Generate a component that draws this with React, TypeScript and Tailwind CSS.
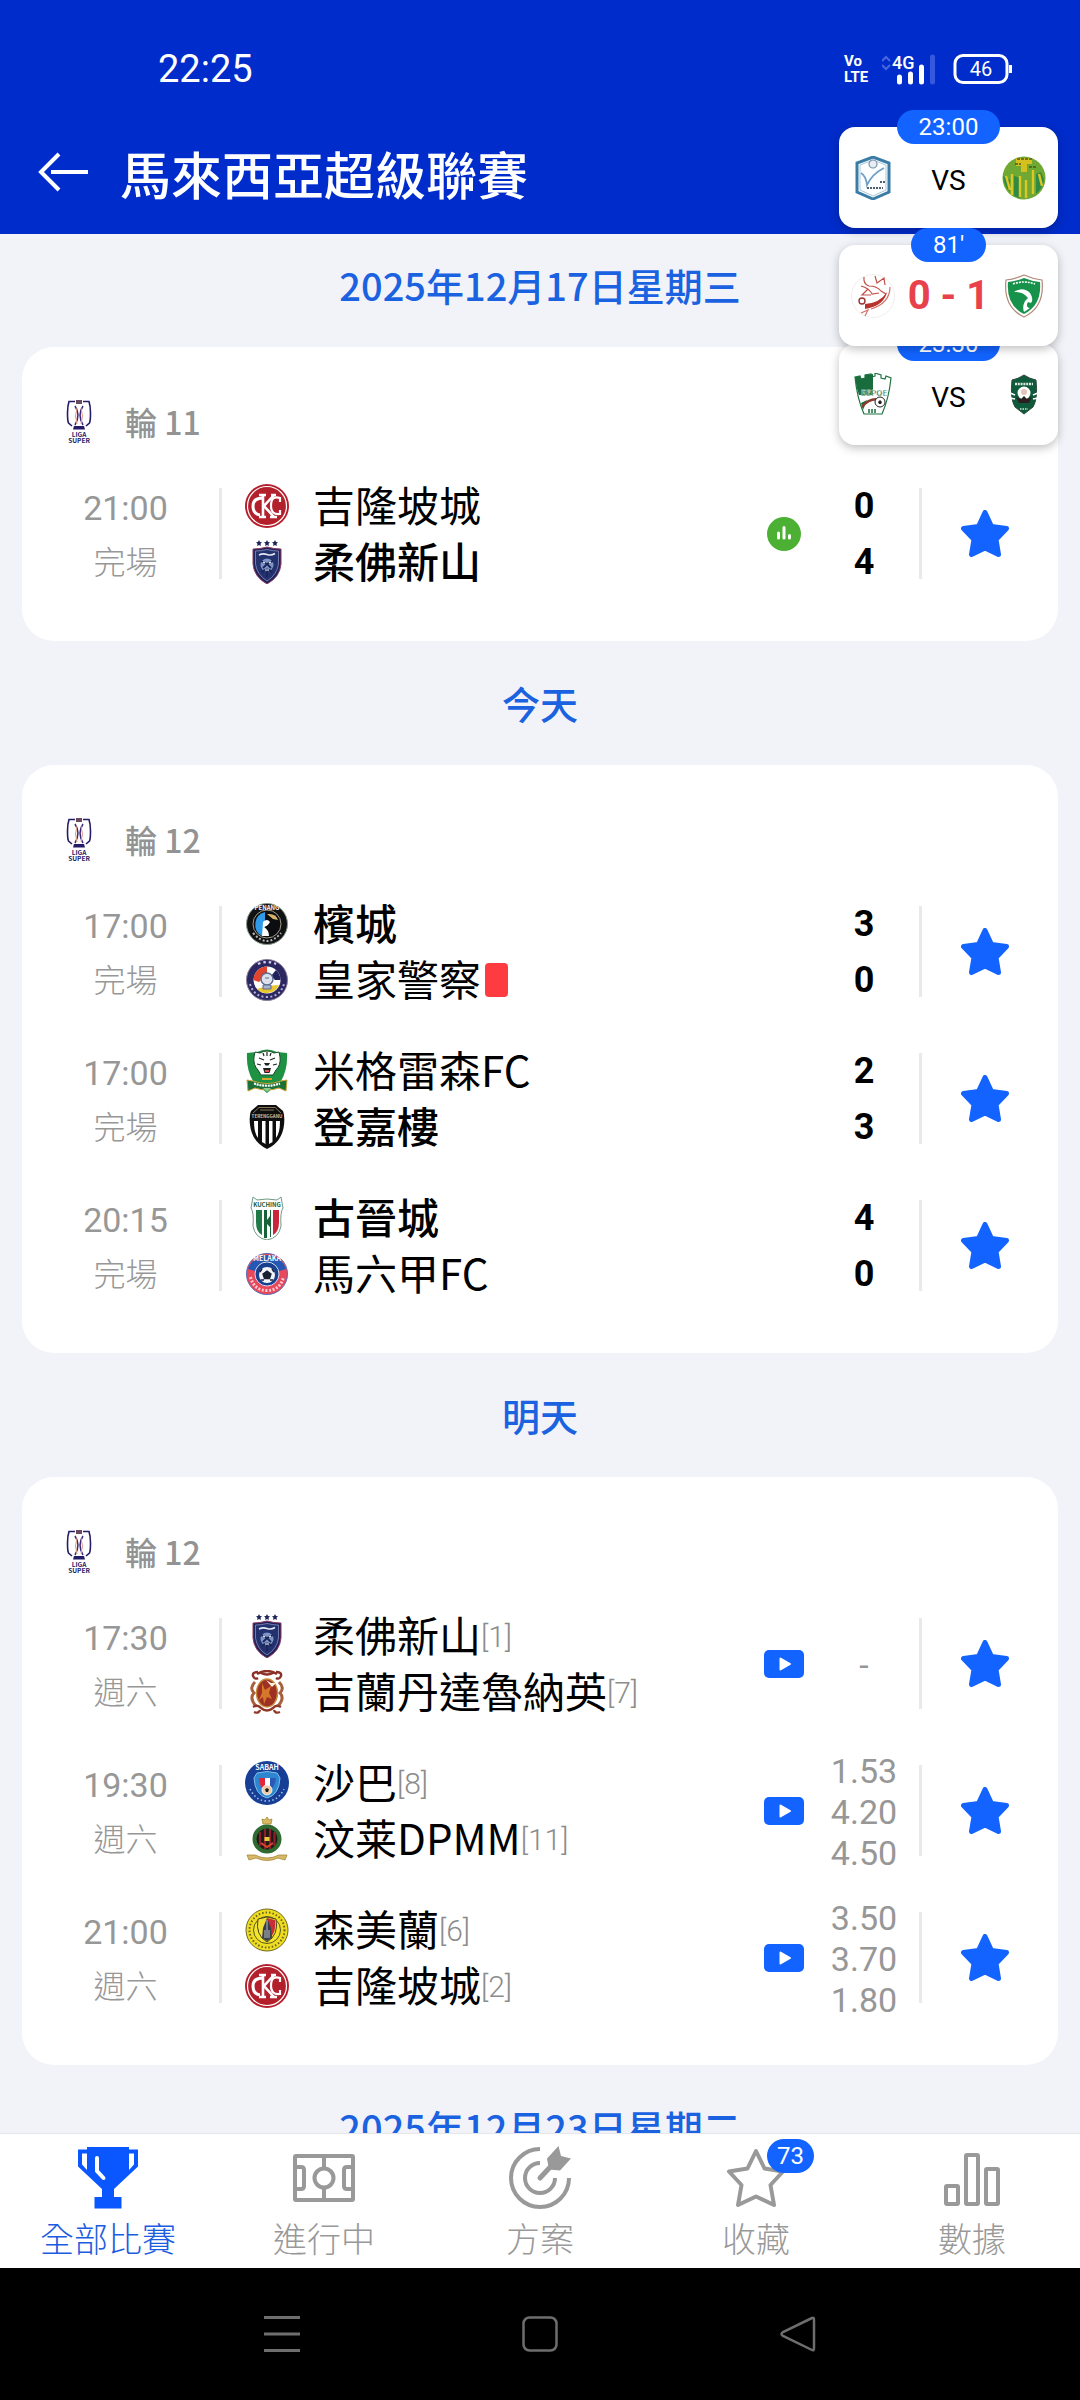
import type { ReactNode } from 'react';

type CrestName =
  | 'kl' | 'jdt' | 'penang' | 'pdrm' | 'misc' | 'terengganu' | 'kuching'
  | 'melaka' | 'kelantan' | 'sabah' | 'dpmm' | 'negeri';

interface Team {
  name: string;
  crest: CrestName;
  bold?: boolean;
  rank?: number;
  redCard?: boolean;
}

interface Match {
  time: string;
  status: string;
  home: Team;
  away: Team;
  score?: [number, number];
  odds?: string[];
  media?: 'stats' | 'video';
}

interface MatchDay {
  title: string;
  round?: string;
  matches: Match[];
}

const DAYS: MatchDay[] = [
  {
    title: '2025年12月17日星期三',
    round: '輪 11',
    matches: [
      {
        time: '21:00',
        status: '完場',
        home: { name: '吉隆坡城', crest: 'kl' },
        away: { name: '柔佛新山', crest: 'jdt', bold: true },
        score: [0, 4],
        media: 'stats',
      },
    ],
  },
  {
    title: '今天',
    round: '輪 12',
    matches: [
      {
        time: '17:00',
        status: '完場',
        home: { name: '檳城', crest: 'penang', bold: true },
        away: { name: '皇家警察', crest: 'pdrm', redCard: true },
        score: [3, 0],
      },
      {
        time: '17:00',
        status: '完場',
        home: { name: '米格雷森FC', crest: 'misc' },
        away: { name: '登嘉樓', crest: 'terengganu', bold: true },
        score: [2, 3],
      },
      {
        time: '20:15',
        status: '完場',
        home: { name: '古晉城', crest: 'kuching', bold: true },
        away: { name: '馬六甲FC', crest: 'melaka' },
        score: [4, 0],
      },
    ],
  },
  {
    title: '明天',
    round: '輪 12',
    matches: [
      {
        time: '17:30',
        status: '週六',
        home: { name: '柔佛新山', crest: 'jdt', rank: 1 },
        away: { name: '吉蘭丹達魯納英', crest: 'kelantan', rank: 7 },
        odds: ['-'],
        media: 'video',
      },
      {
        time: '19:30',
        status: '週六',
        home: { name: '沙巴', crest: 'sabah', rank: 8 },
        away: { name: '汶莱DPMM', crest: 'dpmm', rank: 11 },
        odds: ['1.53', '4.20', '4.50'],
        media: 'video',
      },
      {
        time: '21:00',
        status: '週六',
        home: { name: '森美蘭', crest: 'negeri', rank: 6 },
        away: { name: '吉隆坡城', crest: 'kl', rank: 2 },
        odds: ['3.50', '3.70', '1.80'],
        media: 'video',
      },
    ],
  },
  { title: '2025年12月23日星期二', matches: [] },
];

const STAR = 'M24 2.5 L30.5 16.5 L45.5 18.5 L35 29.5 L37.5 44.5 L24 38 L10.5 44.5 L13 29.5 L2.5 18.5 L17.5 16.5 Z';

const CRESTS: Record<CrestName, ReactNode> = {
  kl: (
    <>
      <circle cx="22" cy="22" r="22" fill="#b3202c" />
      <circle cx="22" cy="22" r="19.5" fill="none" stroke="#fff" strokeWidth="1.2" />
      <path d="M18 14 Q8 14 8 22 Q8 30 15 31" fill="none" stroke="#fff" strokeWidth="3" />
      <path d="M18 10 V33 M14 11 H21 M14 33 H21 M29 11 L19 22 L29 33 M25 33 H32 M26 11 H31" fill="none" stroke="#fff" strokeWidth="2.6" />
      <path d="M35 18 V14 Q26 11 26 22 Q26 31 35 30 V26" fill="none" stroke="#fff" strokeWidth="2.2" />
    </>
  ),
  jdt: (
    <>
      <path d="M14 0 l1 2 2 .3 -1.5 1.5 .4 2.2 -1.9-1 -1.9 1 .4-2.2 -1.5-1.5 2-.3z M22 0 l1 2 2 .3 -1.5 1.5 .4 2.2 -1.9-1 -1.9 1 .4-2.2 -1.5-1.5 2-.3z M30 0 l1 2 2 .3 -1.5 1.5 .4 2.2 -1.9-1 -1.9 1 .4-2.2 -1.5-1.5 2-.3z" fill="#1c2458" />
      <path d="M8 9 Q15 9 22 7 Q29 9 36 9 V24 Q35 37 22 44 Q9 37 8 24 Z" fill="#20215c" stroke="#8a3c60" strokeWidth="1" />
      <path d="M10.5 11 Q16 11 22 9.5 Q28 11 33.5 11 V24 Q32 35 22 41 Q12 35 10.500 24 Z" fill="#23326f" stroke="#aab4d8" strokeWidth="0.6" />
      <path d="M14 15 Q18 13 22 14.5 T30 13.5" fill="none" stroke="#e4e9f6" strokeWidth="1.6" />
      <circle cx="22" cy="25" r="6.5" fill="#7e95c8" />
      <path d="M16 21 L22 24 L28 21 M18 28 L22 24 L26 28 M17 32 Q22 27 27 32 M22 29 V37" fill="none" stroke="#1a2558" strokeWidth="1.8" />
      <path d="M18 22 l2 1 M26 22 l-2 1 M20 30 h4" stroke="#fff" strokeWidth="1.2" />
    </>
  ),
  penang: (
    <>
      <circle cx="22" cy="22" r="20.5" fill="#101214" stroke="#8a9a8a" strokeWidth="1" />
      <circle cx="22" cy="22" r="14" fill="#0c0d10" stroke="#c8c2a0" strokeWidth="0.8" />
      <path d="M20 10 A13 13 0 0 0 17 34 L20 24 Z" fill="#2f9be8" />
      <path d="M18 20 Q22 16 25 20 Q23 24 19 25 Q24 28 24 34 H17 Z" fill="#fff" />
      <path d="M22 12 Q31 11 33 18 L28 17 Z" fill="#d9b46a" />
      <text x="22" y="8" fontSize="6" fontWeight="700" textAnchor="middle" fill="#fff">PENANG</text>
      <path d="M8 31 Q22 47 36 31" fill="none" stroke="#b8b8b8" strokeWidth="2" strokeDasharray="2 2" />
    </>
  ),
  pdrm: (
    <>
      <circle cx="22" cy="22" r="20.5" fill="#2b2760" stroke="#8a8098" strokeWidth="1" />
      <circle cx="22" cy="22" r="13.5" fill="#fff" />
      <path d="M8.5 22 A13.5 13.5 0 0 1 22 8.5 L22 16 L14 24 Z" fill="#e2432c" />
      <path d="M35.5 22 A13.5 13.5 0 0 0 31 12 L26 18 L30 22 Z" fill="#20225c" />
      <path d="M34 27 A13.5 13.5 0 0 1 12 31 L22 28 Z" fill="#e9c62f" />
      <circle cx="22" cy="21" r="6" fill="#dbe2ee" stroke="#5c6a8c" strokeWidth="1.4" />
      <path d="M18 27 H26 V31 H18 Z M20 20 h4" fill="#a9b4cc" stroke="#5c6a8c" />
      <path d="M13 6 Q22 2 31 6" fill="none" stroke="#d8d4ec" strokeWidth="2.2" strokeDasharray="2.5 3" />
      <path d="M5 26 Q9 39 22 39 Q35 39 39 26" fill="none" stroke="#b8b2d8" strokeWidth="2" strokeDasharray="2 2.4" />
    </>
  ),
  misc: (
    <>
      <path d="M2 4 L12 3 Q22 -2 32 3 L42 4 Q43 20 36 32 L22 44 L8 32 Q1 20 2 4 Z" fill="#1f9143" />
      <path d="M10 3 L15 4 Q22 0 29 4 L34 3 L35 8 Q36 16 31 21 L28 26 H16 L13 21 Q8 16 9 8 Z" fill="#fff" stroke="#1c4a2a" strokeWidth="1" />
      <path d="M14 9 L19 11 M30 9 L25 11 M12 15 L16 16 M32 15 L28 16 M22 3 V7 M18 4 L19 7 M26 4 L25 7" stroke="#1d2a20" strokeWidth="1.2" />
      <path d="M19 14 H25 L23.5 16.5 H20.5 Z M18 19 H26 L24.5 24 H19.5 Z" fill="#222" />
      <path d="M20 21 H24 V23 H20 Z" fill="#d9534a" />
      <path d="M2 31 L8 32 Q22 37 36 32 L42 31 L41 42 L34 39 Q22 43 10 39 L3 42 Z" fill="#1b6f38" stroke="#c9a437" strokeWidth="1" />
      <path d="M9 34.5 Q22 39 35 34.5" fill="none" stroke="#fff" strokeWidth="2.2" strokeDasharray="2 0.8" />
      <path d="M17 30 H27" stroke="#d6a52c" strokeWidth="2" />
      <path d="M18 39 H26 L22 43 Z" fill="#8cc890" />
    </>
  ),
  terengganu: (
    <>
      <path d="M13 0 H31 L38 6 Q40 10 39 20 Q37 37 22 44 Q7 37 5 20 Q4 10 6 6 Z" fill="#0f0e0f" />
      <path d="M8 8 L14 2.5 H30 L36 8 M15 5 H29" fill="none" stroke="#a5926a" strokeWidth="0.8" />
      <text x="22" y="13" fontSize="4.5" fontWeight="700" textAnchor="middle" fill="#c8c0a8">TERENGGANU</text>
      <path d="M9 16 H13 V33 Q9 28 9 16 Z M17 16 H20.5 V39 L17 37 Z M24 16 H27.5 V37 L24 39 Z M31 16 H35 Q35 28 31 33 Z" fill="#fff" />
    </>
  ),
  kuching: (
    <>
      <path d="M8 1 L12 4 Q22 2 32 4 L36 1 L38 12 Q35 16 36 30 Q34 42 22 44 Q10 42 8 30 Q9 16 6 12 Z" fill="#fff" stroke="#6f9a84" strokeWidth="1" />
      <text x="22" y="10.500" fontSize="6" fontWeight="700" textAnchor="middle" fill="#155c3a">KUCHING</text>
      <path d="M11 14 H17 V39 Q11 36 11 26 Z" fill="#1f7a48" />
      <path d="M19 14 H22 V24 L25 20 V14 H26 V41 H25 V31 L22 28 V42 H19 Z" fill="#176238" />
      <path d="M28 14 H34 V26 Q34 36 28 39 Z" fill="#c9263c" />
    </>
  ),
  melaka: (
    <>
      <circle cx="22" cy="22" r="20.5" fill="#e8485c" stroke="#5c6cb0" strokeWidth="1" />
      <path d="M3 17 A20 20 0 0 1 41 17 L34 19 H10 Z" fill="#2458b4" />
      <circle cx="22" cy="22" r="12" fill="#17408e" stroke="#fff" strokeWidth="0.8" />
      <circle cx="22" cy="23" r="8" fill="#f4f6fa" />
      <path d="M22 19 l4 3 -1.5 4.5 h-5 L18 22 Z M15 20 l2 -3 M29 20 l-2 -3 M16 28 l3 0 M28 28 l-3 0" fill="#1b2233" stroke="#1b2233" strokeWidth="1.4" />
      <text x="22" y="9" fontSize="7" fontWeight="700" textAnchor="middle" fill="#fff">MELAKA</text>
      <path d="M5.5 25 Q9 38.5 22 38.5 Q35 38.5 38.5 25" fill="none" stroke="#ffc8cf" strokeWidth="3" strokeDasharray="2 1.6" />
    </>
  ),
  kelantan: (
    <>
      <path d="M12 4 Q22 -2 32 4 M16 3 Q22 6 28 3 M13 2 Q7 2 8 6 Q10 10 13 8 M31 2 Q37 2 36 6 Q34 10 31 8" fill="none" stroke="#8c3026" strokeWidth="2.4" />
      <path d="M10 12 Q4 18 9 23 Q4 28 11 36 M34 12 Q40 18 35 23 Q40 28 33 36" fill="none" stroke="#a85f3c" strokeWidth="3" />
      <ellipse cx="22" cy="23" rx="10.5" ry="14" fill="#9c3124" stroke="#c58b3a" strokeWidth="1.4" />
      <path d="M21 10 L26 13 L31 13 L27 17 Z" fill="#fff3e0" />
      <path d="M17 13 L20 20 L26 16 L24 23 L27 29 L22 27 L19 34 L18 27 L14 30 L17 23 Z" fill="#d5782c" />
      <path d="M8 37 Q13 34 16 38 Q22 43 28 38 Q31 34 36 37 M9 42 Q14 44 15 40 M35 42 Q30 44 29 40" fill="none" stroke="#8f3a28" strokeWidth="2.4" />
    </>
  ),
  sabah: (
    <>
      <circle cx="22" cy="22" r="22" fill="#173f96" />
      <path d="M12 12 Q22 9 32 12 L35 17 Q34 34 22 37 Q10 34 9 17 Z" fill="#2f86d0" stroke="#7fbdea" strokeWidth="1" />
      <path d="M14 17 H20 V29 Q14 26 14 17 Z" fill="#e2273a" />
      <path d="M20 17 H25 V30 H20 Z" fill="#fff" />
      <path d="M25 17 H31 Q30 26 25 29 Z" fill="#2c59b8" />
      <circle cx="22" cy="29" r="5" fill="#f0c9a4" stroke="#fff" strokeWidth="0.8" />
      <path d="M22 27 l2 1.6 -1 2.4 h-2 l-1-2.4 Z" fill="#14181f" />
      <text x="22" y="9" fontSize="7" fontWeight="700" textAnchor="middle" fill="#fff">SABAH</text>
      <path d="M5 28 Q11 40 22 40 Q33 40 39 28" fill="none" stroke="#a8bce8" strokeWidth="1.6" strokeDasharray="1.5 2.4" />
    </>
  ),
  dpmm: (
    <>
      <path d="M17 2 L20 3 L22 0 L24 3 L27 2 L26 7 H18 Z" fill="#d8b964" stroke="#a98632" strokeWidth="0.8" />
      <ellipse cx="22" cy="22" rx="12.5" ry="12.5" fill="#1c1a16" stroke="#2f6a30" strokeWidth="4" />
      <path d="M15 15 V29 M20 12 V32 M25 12 V32 M29.500 15 V29" stroke="#8c1f2b" strokeWidth="2.2" />
      <path d="M19.5 20 H24.5 V24 H19.5 Z" fill="#e8cb3c" />
      <path d="M16 26 L22 30 L28 26" fill="none" stroke="#d8472c" strokeWidth="2" />
      <path d="M2 38 L10 38 Q22 44 34 38 L42 38 L40 43 L33 41 Q22 46 11 41 L4 43 Z" fill="#d6b866" stroke="#a88838" strokeWidth="0.8" />
    </>
  ),
  negeri: (
    <>
      <circle cx="22" cy="22" r="21" fill="#eddc20" stroke="#6f6a24" strokeWidth="1" />
      <circle cx="22" cy="22" r="17.5" fill="none" stroke="#6d6420" strokeWidth="2" strokeDasharray="1.5 2" />
      <circle cx="22" cy="22" r="13.5" fill="#f3e52c" stroke="#5c5620" strokeWidth="1" />
      <path d="M13 11 L22 9 L31 11 Q34 27 22 34 Q10 27 13 11 Z" fill="#f2e233" stroke="#444022" strokeWidth="1" />
      <path d="M22 10 L30 12 Q32 26 22 33 Z" fill="#c93036" />
      <path d="M22 10 L18 20 L17 30 L22 33 L27 30 L26 20 Z" fill="#39404a" />
      <path d="M22 12 V30 M20 22 V30 M24 22 V30" stroke="#c8ccd2" strokeWidth="0.9" />
    </>
  ),
};

function Crest({ name }: { name: CrestName }) {
  return (
    <svg viewBox="0 0 44 44" className="size-11 shrink-0" aria-hidden="true">
      {CRESTS[name]}
    </svg>
  );
}

function LeagueLogo() {
  return (
    <svg viewBox="0 0 44 44" className="size-11 shrink-0" aria-hidden="true">
      <path d="M18 2.5 H12 Q10.5 7 10.5 14 Q10.5 22 11.5 24 L15 27 M26 2.5 H32 Q33.5 7 33.5 14 Q33.5 22 32.5 24 L29 27" fill="none" stroke="#251c68" strokeWidth="1.6" />
      <path d="M19 1 H25 V5 H19 Z" fill="#6a4a5e" />
      <path d="M18 7 Q24 16 18 26" fill="none" stroke="#3a2a7c" strokeWidth="1.5" />
      <path d="M26 7 Q20 16 26 26" fill="none" stroke="#3a2a7c" strokeWidth="1.5" />
      <path d="M20 9 Q17 17 20 25 M24 9 Q27 17 24 25" fill="none" stroke="#e59a84" strokeWidth="1" />
      <path d="M17 27 H27 L28 30.5 H16 Z" fill="#251c68" />
      <text x="22" y="37.5" fontSize="6.5" fontWeight="700" textAnchor="middle" fill="#251c68">LIGA</text>
      <text x="22" y="43.5" fontSize="6.5" fontWeight="700" textAnchor="middle" fill="#251c68">SUPER</text>
    </svg>
  );
}

function MediaIcon({ kind }: { kind?: 'stats' | 'video' }) {
  if (kind === 'stats') {
    return (
      <svg viewBox="0 0 34 34" className="size-[34px]" aria-label="統計">
        <circle cx="17" cy="17" r="17" fill="#4cb034" />
        <path d="M11.5 16 V21 M17 10.5 V21 M22.5 18.5 V21" stroke="#fff" strokeWidth="3" strokeLinecap="round" />
      </svg>
    );
  }
  if (kind === 'video') {
    return (
      <svg viewBox="0 0 40 28" className="h-7 w-10" aria-label="影片">
        <rect width="40" height="28" rx="5" fill="#1263ff" />
        <path d="M16.5 8.5 L26 14 L16.5 19.5 Z" fill="#fff" stroke="#fff" strokeWidth="2" strokeLinejoin="round" />
      </svg>
    );
  }
  return null;
}

function TeamLine({ team }: { team: Team }) {
  return (
    <div className="flex h-14 items-center gap-6">
      <Crest name={team.crest} />
      <div className="flex items-center pb-1">
        <span className={team.bold ? 'text-[42px] leading-[52px] font-medium' : 'text-[42px] leading-[52px]'}>
          {team.name}
        </span>
        {team.rank && (
          <span className="pt-1.5 font-['Roboto'] text-[30px] leading-[46px] font-light text-[#8c8c8c]">
            [{team.rank}]
          </span>
        )}
        {team.redCard && <span className="mt-1 ml-1 h-[34px] w-[23px] rounded bg-[#ff3b42]" />}
      </div>
    </div>
  );
}

function MatchRow({ match }: { match: Match }) {
  return (
    <li className="flex h-[147px] items-center px-2.5">
      <div className="w-[187px] text-center text-[#979797]">
        <div className="font-['Roboto'] text-[34px] leading-[52px]">{match.time}</div>
        <div className="text-[32px] leading-[52px] font-light">{match.status}</div>
      </div>
      <div className="h-[91px] w-[3px] bg-[#e9e9ec]" />
      <div className="flex-1 pl-[23px] text-black">
        <TeamLine team={match.home} />
        <TeamLine team={match.away} />
      </div>
      <div className="flex w-[50px] justify-center">
        <MediaIcon kind={match.media} />
      </div>
      <div className="w-[110px] text-center font-['Roboto']">
        {match.score?.map((goals, i) => (
          <div key={i} className="text-4xl leading-[56px] font-bold text-black">{goals}</div>
        ))}
        {match.odds && (
          <div className="pt-1">
            {match.odds.map((odd) => (
              <div key={odd} className="text-[34px] leading-[41px] text-[#979797]">{odd}</div>
            ))}
          </div>
        )}
      </div>
      <div className="h-[91px] w-[3px] bg-[#e9e9ec]" />
      <div className="flex w-[126px] justify-center">
        <button type="button" aria-label="收藏">
          <svg viewBox="0 0 48 48" className="size-12">
            <path d={STAR} fill="#1263ff" stroke="#1263ff" strokeWidth="5" strokeLinejoin="round" />
          </svg>
        </button>
      </div>
    </li>
  );
}

function DaySection({ day }: { day: MatchDay }) {
  return (
    <section>
      <h2 className="pb-9 text-center text-[38px] leading-[52px] font-medium text-[#1b62e0]">{day.title}</h2>
      {day.round && (
        <div className="rounded-4xl bg-white pb-[34px]">
          <div className="flex items-center gap-6 pt-[52px] pb-[17px] pl-[35px]">
            <LeagueLogo />
            <span className="text-[32px] leading-[44px] font-medium text-[#939393]">{day.round}</span>
          </div>
          <ul>
            {day.matches.map((match) => (
              <MatchRow key={match.home.name} match={match} />
            ))}
          </ul>
        </div>
      )}
    </section>
  );
}

function StatusBar() {
  return (
    <div className="flex h-[138px] items-center justify-between pr-[68px] pl-[158px] font-['Roboto'] text-white">
      <span className="text-[38px]">22:25</span>
      <div className="flex items-center">
        <div className="w-[30px] text-[15px] leading-4 font-bold">
          <div>Vo</div>
          <div>LTE</div>
        </div>
        <svg viewBox="0 0 130 32" className="ml-2 h-8 w-[130px]" aria-hidden="true">
          <path d="M0 8 l4 -4 4 4 M0 12 l4 4 4 -4" fill="none" stroke="#4668e0" strokeWidth="2" />
          <text x="10" y="16" fontSize="18" fontWeight="500" fill="#fff">4G</text>
          <path d="M17.5 24 V29 M28.5 21 V29 M39.5 14 V29" stroke="#fff" strokeWidth="5" strokeLinecap="round" />
          <path d="M50.5 4 V29" stroke="#3558dc" strokeWidth="5" strokeLinecap="round" />
          <rect x="73" y="2.5" width="52" height="27" rx="8" fill="none" stroke="#fff" strokeWidth="3" />
          <path d="M128.5 12 V20" stroke="#fff" strokeWidth="3" />
          <text x="99" y="23" fontSize="20" textAnchor="middle" fill="#fff">46</text>
        </svg>
      </div>
    </div>
  );
}

function FloatingMatch({ label, left, right, children, className }: {
  label: string;
  left: ReactNode;
  right: ReactNode;
  children: ReactNode;
  className: string;
}) {
  return (
    <div className={`flex flex-col items-center ${className}`}>
      <span className="relative -mb-[17px] rounded-full bg-[#1263ff] px-[22px] font-['Roboto'] text-2xl leading-[34px] text-white">
        {label}
      </span>
      <div className="flex h-[101px] w-full items-center justify-between rounded-2xl bg-white px-3 shadow-[0_3px_10px_rgba(0,0,0,0.25)]">
        <svg viewBox="0 0 44 44" className="size-11" aria-hidden="true">{left}</svg>
        {children}
        <svg viewBox="0 0 44 44" className="size-11" aria-hidden="true">{right}</svg>
      </div>
    </div>
  );
}

function FloatingMatches() {
  return (
    <aside className="absolute top-[110px] right-[22px] w-[219px]">
      <FloatingMatch
        label="23:00"
        className=""
        left={
          <>
            <path d="M22 1 L38 7 V36 L22 43 L6 36 V7 Z" fill="#fdfeff" stroke="#3a7ca5" strokeWidth="3" />
            <path d="M22 4 L35 9 V34 L22 40 L9 34 V9 Z" fill="none" stroke="#a8c8dc" strokeWidth="1" />
            <circle cx="22" cy="8" r="4" fill="#e6edf4" stroke="#7a92a8" strokeWidth="1.2" />
            <path d="M10 17 Q15 20 16 29 Q21 18 33 12" fill="none" stroke="#6f9fc6" strokeWidth="1.8" />
            <path d="M16 32 H32 M29 26 H34" stroke="#50606e" strokeWidth="1.8" strokeDasharray="2 1" />
          </>
        }
        right={
          <>
            <circle cx="22" cy="22" r="21.5" fill="#6fa832" />
            <path d="M1 20 L8 24 V36 Q2 30 1 20 Z M12 20 V40 L18 42 V22 Z M34 18 V38 Q41 32 42 24 L39 16 Z" fill="#2f8a44" />
            <path d="M14 2 H30 V8 H25 V16 H19 V10 H14 Z" fill="#d6c020" />
            <path d="M4 20 L8 34 M10 18 V39 M18 20 V41 M24 24 V42 M31 14 V38 M37 18 L40 30" stroke="#dcc724" strokeWidth="2.4" />
            <path d="M15 3 H31 M13 8 H19 M27 11 H34" stroke="#49591e" strokeWidth="1.5" strokeDasharray="3 1" />
          </>
        }
      >
        <span className="pt-1.5 font-['Roboto'] text-[28px] text-black">VS</span>
      </FloatingMatch>
      <FloatingMatch
        label="81'"
        className="relative z-10"
        left={
          <>
            <circle cx="22" cy="22" r="21.5" fill="#fff" stroke="#f1eeee" />
            <path d="M13 3 Q12 10 18 12 Q26 12 30 17 L35 20 M24 2 L26 9 L33 4 L34 11 M10 12 Q18 14 21 20 L28 19 M17 15 L11 21 H20" fill="none" stroke="#c25048" strokeWidth="1.2" />
            <path d="M14 30 Q29 29 36 18 Q33 32 14 35 Z" fill="#b6332e" />
            <path d="M39 13 Q39 29 20 35 M10 39 L17 36 L14 42" fill="none" stroke="#d2716a" strokeWidth="1.2" />
            <circle cx="11" cy="27" r="3" fill="#fff" stroke="#9a3430" strokeWidth="1.4" />
          </>
        }
        right={
          <>
            <path d="M4 6 Q13 5 22 1 Q31 5 40 6 Q43 33 22 43 Q1 33 4 6 Z" fill="#fff" stroke="#b08a78" strokeWidth="1.2" />
            <path d="M6 8 Q15 7 22 4 Q29 7 38 8 Q40 31 22 40 Q4 31 6 8 Z" fill="#17924a" />
            <path d="M11 10 Q22 6 33 10" fill="none" stroke="#fff" strokeWidth="1.6" strokeDasharray="2 1" />
            <path d="M12 18 Q21 12 28 19 Q32 25 29 29 L26 28 Q23 33 28 34 L22 38 Q20 33 23 27 L26 24 Q21 17 12 18 Z" fill="#fff" />
          </>
        }
      >
        <span className="font-['Roboto'] text-[40px] font-bold text-[#e8414b]">0 - 1</span>
      </FloatingMatch>
      <FloatingMatch
        label="23:30"
        className="-mt-[19px]"
        left={
          <>
            <path d="M4 4 L9 3 L10 6 L14 5 V2 L20 1 V4 L24 3 V0 L30 2 V5 L34 6 L35 3 L40 5 Q38 25 31 41 H13 Q6 25 4 4 Z" fill="#fff" stroke="#1f7242" strokeWidth="1.2" />
            <path d="M4 4 L9 3 L10 6 L14 5 V2 L22 1 V22 H8 Q5 14 4 4 Z M10 30 L16 27 L12 37 Z" fill="#196d3c" />
            <text x="23" y="23" fontSize="8" fontWeight="700" textAnchor="middle" fill="#196d3c" stroke="#fff" strokeWidth="0.3">БЕРОЕ</text>
            <path d="M11 34 Q19 24 30 27" fill="none" stroke="#8a3c2c" strokeWidth="2.5" />
            <circle cx="29" cy="29" r="5" fill="#fff" stroke="#222" strokeWidth="1" />
            <path d="M29 27 l2 2 -1 2 h-2 l-1 -2 Z" fill="#222" />
            <path d="M18 36 V40 M21 36 V40 M24 36 V40" stroke="#196d3c" strokeWidth="1.5" />
          </>
        }
        right={
          <>
            <path d="M22 2 Q28 6 34 7 Q36 26 31 34 L22 41 L13 34 Q8 26 10 7 Q16 6 22 2 Z" fill="#0f5a3a" stroke="#2d4a3e" strokeWidth="1" />
            <path d="M13 11 H31" stroke="#dbe8e0" strokeWidth="2.4" strokeDasharray="2 0.8" />
            <path d="M8 20 L13 22 M8 25 L13 26 M36 20 L31 22 M36 25 L31 26" stroke="#fff" strokeWidth="1.6" />
            <circle cx="22" cy="20" r="6.5" fill="#fff" />
            <path d="M14 24 L19 26 L22 23 L25 26 L30 24 L27 30 H17 Z" fill="#2b1f22" />
            <circle cx="22" cy="19" r="3" fill="#e3c4b8" />
            <path d="M18 36 H26" stroke="#dbe8e0" strokeWidth="1.6" strokeDasharray="1.5 1" />
          </>
        }
      >
        <span className="pt-1.5 font-['Roboto'] text-[28px] text-black">VS</span>
      </FloatingMatch>
    </aside>
  );
}

interface TabItem {
  label: string;
  active?: boolean;
  badge?: number;
  icon: ReactNode;
}

const TABS: TabItem[] = [
  {
    label: '全部比賽',
    active: true,
    icon: (
      <>
        <path fillRule="evenodd" d="M11 1 H53 V3.5 H62 V20.5 L38 43 V51 H45.5 V62.5 H18.5 V51 H26 V43 L2 20.5 V3.5 H11 Z M6 7.5 V18.5 L11 24 V7.5 Z M53 7.5 V24 L58 18.5 V7.5 Z" fill="#0a57ff" />
        <path d="M21 12 V25 L27.5 32" fill="none" stroke="#fff" strokeWidth="4" strokeLinecap="round" />
      </>
    ),
  },
  {
    label: '進行中',
    icon: (
      <g fill="none" stroke="#999" strokeWidth="4">
        <rect x="3" y="10" width="58" height="44" rx="1" />
        <path d="M32 10 V22 M32 42 V54 M3 21 H9 Q12 21 12 24 V40 Q12 43 9 43 H3 M61 21 H55 Q52 21 52 24 V40 Q52 43 55 43 H61" />
        <circle cx="32" cy="32" r="9.5" />
      </g>
    ),
  },
  {
    label: '方案',
    icon: (
      <>
        <path d="M32 3 A29 29 0 1 0 61 32 M32 17 A15 15 0 1 0 47 32" fill="none" stroke="#999" strokeWidth="4" />
        <path d="M32 32 L45 18" stroke="#999" strokeWidth="5" strokeLinecap="round" />
        <path d="M50.5 0 L53 10 L63 12.5 L52 24.5 L41 23.5 L39 12.5 Z" fill="#999" />
      </>
    ),
  },
  {
    label: '收藏',
    badge: 73,
    icon: (
      <path d="M32 5 L40.5 22.5 L59 25.5 L46.5 39 L50 59 L32 50.5 L14 59 L17.5 39 L5 25.5 L23.5 22.5 Z" fill="none" stroke="#999" strokeWidth="4" strokeLinejoin="round" />
    ),
  },
  {
    label: '數據',
    icon: (
      <g fill="none" stroke="#999" strokeWidth="4">
        <rect x="6" y="40" width="12" height="18" rx="1" />
        <rect x="26" y="9" width="12" height="49" rx="1" />
        <rect x="46" y="23" width="12" height="35" rx="1" />
      </g>
    ),
  },
];

function TabBar() {
  return (
    <nav className="grid grid-cols-5 border-t border-[#e6e7eb] bg-white pt-3 pb-0.5">
      {TABS.map((tab) => (
        <a
          key={tab.label}
          href="#"
          className={tab.active ? 'flex flex-col items-center text-[#1c5ce0]' : 'flex flex-col items-center text-[#999]'}
        >
          <span className="relative">
            <svg viewBox="0 0 64 64" className="size-16" aria-hidden="true">{tab.icon}</svg>
            {tab.badge && (
              <span className="absolute -top-[7px] left-[43px] rounded-full bg-[#1263ff] px-2.5 font-['Roboto'] text-2xl leading-[34px] text-white">
                {tab.badge}
              </span>
            )}
          </span>
          <span className="text-[34px] leading-[56px] font-light">{tab.label}</span>
        </a>
      ))}
    </nav>
  );
}

function SystemBar() {
  return (
    <div className="flex h-[132px] items-center justify-center gap-[222px] bg-black">
      <button type="button" aria-label="最近">
        <svg viewBox="0 0 36 36" className="size-9">
          <path d="M0 1.5 H36 M0 18 H36 M0 34.5 H36" stroke="#6e6e6e" strokeWidth="3" />
        </svg>
      </button>
      <button type="button" aria-label="主頁">
        <svg viewBox="0 0 36 36" className="size-9">
          <rect x="1.5" y="1.5" width="33" height="33" rx="6" fill="none" stroke="#6e6e6e" strokeWidth="2.5" />
        </svg>
      </button>
      <button type="button" aria-label="返回上一頁">
        <svg viewBox="0 0 36 36" className="size-9">
          <path d="M32 2 Q34 1 34 4 V32 Q34 35 32 34 L3 20 Q0 18 3 16 Z" fill="none" stroke="#6e6e6e" strokeWidth="2.5" />
        </svg>
      </button>
    </div>
  );
}

export default function App() {
  return (
    <div className="relative flex h-screen flex-col overflow-hidden bg-[#f2f3f8] font-['Noto_Sans_CJK_TC',sans-serif]">
      <header className="bg-[#002ccb] text-white">
        <StatusBar />
        <div className="flex h-24 items-start gap-8 pl-[38px]">
          <button type="button" aria-label="返回" className="pt-3">
            <svg viewBox="0 0 50 44" className="h-11 w-[50px]">
              <path d="M21 4 L3 22 L21 40 M13 22 H50" fill="none" stroke="#fff" strokeWidth="4" />
            </svg>
          </button>
          <h1 className="text-[51px] leading-[70px] font-medium">馬來西亞超級聯賽</h1>
        </div>
      </header>
      <main className="flex min-h-0 flex-1 flex-col gap-9 overflow-hidden px-[22px] pt-[25px]">
        {DAYS.map((day) => (
          <DaySection key={day.title} day={day} />
        ))}
      </main>
      <TabBar />
      <SystemBar />
      <FloatingMatches />
    </div>
  );
}
